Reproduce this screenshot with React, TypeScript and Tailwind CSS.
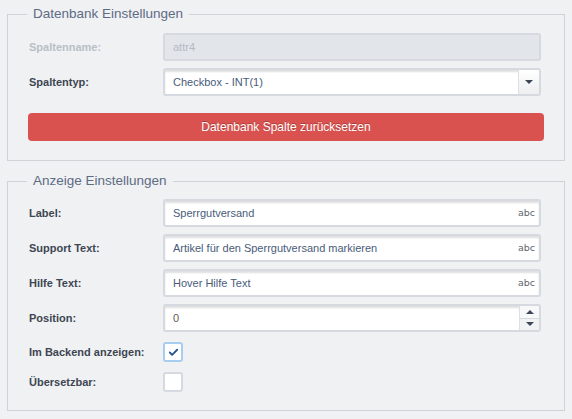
import { Check } from "lucide-react"

const font = { fontFamily: '"Liberation Sans", Arial, sans-serif' }

function Caret({ up = false }: { up?: boolean }) {
  return (
    <svg width="8" height="4" viewBox="0 0 8 4" className="block">
      <path d={up ? "M0 4 L4 0 L8 4 Z" : "M0 0 L8 0 L4 4 Z"} fill="#3d4654" />
    </svg>
  )
}

function Row({ label, children, muted = false }: { label: string; children: React.ReactNode; muted?: boolean }) {
  return (
    <div className="flex h-[28px] items-center">
      <div className={`w-[134px] text-[11px] font-bold ${muted ? "text-[#b9bfc8]" : "text-[#3e4652]"}`}>{label}</div>
      {children}
    </div>
  )
}

function TextField({ value, icon = true }: { value: string; icon?: boolean }) {
  return (
    <div className="flex h-[28px] w-[378px] items-center rounded-[3px] border-2 border-[#d6dae0] bg-white pl-[8px] pr-[4px] shadow-[inset_0_2px_2px_rgba(0,0,0,0.13)]">
      <span className="flex-1 text-[11px] text-[#485c7a]">{value}</span>
      {icon && <span className="text-[9.5px] text-[#60656c]" style={{ fontFamily: '"DejaVu Sans", sans-serif' }}>abc</span>}
    </div>
  )
}

export default function App() {
  return (
    <div className="min-h-screen bg-[#eff1f3] pt-[4px]" style={font}>
      <fieldset className="ml-[7px] w-[558px] border border-[#cfd3d8] pl-[21px] pr-[20px] pt-[9px] pb-[19px]">
        <legend className="ml-[-2px] px-[6px] text-[13.5px] leading-[20px] text-[#5e6b84]">Datenbank Einstellungen</legend>
        <Row label="Spaltenname:" muted>
          <div className="flex h-[28px] w-[378px] items-center rounded-[3px] border-2 border-[#d6dae0] bg-[#e2e5ea] pl-[8px] text-[11px] text-[#b3bac4]">attr4</div>
        </Row>
        <div className="mt-[7px]">
          <Row label="Spaltentyp:">
            <div className="flex h-[28px] w-[378px] items-stretch overflow-hidden rounded-[3px] border-2 border-[#d6dae0] bg-white shadow-[inset_0_2px_2px_rgba(0,0,0,0.13)]">
              <span className="flex flex-1 items-center pl-[8px] text-[11px] text-[#485c7a]">Checkbox - INT(1)</span>
              <span className="flex w-[21px] items-center justify-center border-l border-[#dcdfe3] bg-gradient-to-b from-white to-[#eceef0]">
                <Caret />
              </span>
            </div>
          </Row>
        </div>
        <button className="ml-[-1px] mt-[17px] block h-[28px] w-[516px] rounded-[4px] bg-[#d9524f] text-[12px] text-white [text-shadow:0_-1px_0_rgba(0,0,0,0.25)]">
          Datenbank Spalte zurücksetzen
        </button>
      </fieldset>

      <fieldset className="ml-[7px] mt-[10px] w-[558px] border border-[#cfd3d8] pl-[21px] pr-[20px] pt-[8px] pb-[16px]">
        <legend className="ml-[-2px] px-[6px] text-[13.5px] leading-[20px] text-[#5e6b84]">Anzeige Einstellungen</legend>
        <div className="flex flex-col gap-[7px]">
          <Row label="Label:">
            <TextField value="Sperrgutversand" />
          </Row>
          <Row label="Support Text:">
            <TextField value="Artikel für den Sperrgutversand markieren" />
          </Row>
          <Row label="Hilfe Text:">
            <TextField value="Hover Hilfe Text" />
          </Row>
          <Row label="Position:">
            <div className="flex h-[28px] w-[378px] items-stretch overflow-hidden rounded-[3px] border-2 border-[#d6dae0] bg-white shadow-[inset_0_2px_2px_rgba(0,0,0,0.13)]">
              <span className="flex flex-1 items-center pl-[8px] text-[11px] text-[#5f5a58]">0</span>
              <span className="flex w-[20px] flex-col border-l border-[#dcdfe3]">
                <span className="flex flex-1 items-center justify-center border-b border-[#d6dae0] bg-[#f7f8f9]">
                  <Caret up />
                </span>
                <span className="flex flex-1 items-center justify-center bg-[#f1f2f4]">
                  <Caret />
                </span>
              </span>
            </div>
          </Row>
        </div>
        <div className="mt-[8px] flex h-[24px] items-center">
          <div className="w-[134px] text-[11px] font-bold text-[#3e4652]">Im Backend anzeigen:</div>
          <span className="flex h-[20px] w-[20px] items-center justify-center rounded-[3px] border-2 border-[#a8cdf1] bg-white">
            <Check className="h-[11px] w-[11px] text-[#24558f]" strokeWidth={4} />
          </span>
        </div>
        <div className="mt-[6px] flex h-[24px] items-center">
          <div className="w-[134px] text-[11px] font-bold text-[#3e4652]">Übersetzbar:</div>
          <span className="h-[20px] w-[20px] rounded-[3px] border-2 border-[#d6dae0] bg-white" />
        </div>
      </fieldset>
    </div>
  )
}
